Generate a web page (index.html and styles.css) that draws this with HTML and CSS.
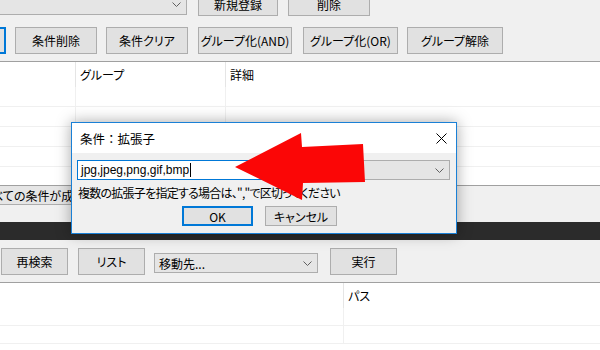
FILE: index.html
```html
<!DOCTYPE html>
<html lang="ja">
  <head>
    <meta charset="UTF-8">
    <title>条件：拡張子</title>
    <link rel="stylesheet" href="styles.css">
  </head>
  <body>
    <div class="pane">
      <div class="toolbar top-row">
        <div class="combo combo-top">
          <svg class="chev" width="9" height="5" viewBox="0 0 9 5"><polyline points="0.5,0.5 4.5,4.5 8.5,0.5"/></svg>
        </div>
        <button class="btn w-reg">新規登録</button>
        <button class="btn w-del">削除</button>
      </div>
      <div class="toolbar cond-row">
        <button class="btn btn-focus btn-cut"></button>
        <button class="btn w-cdel">条件削除</button>
        <button class="btn w-cclr">条件クリア</button>
        <button class="btn w-and">グループ化(AND)</button>
        <button class="btn w-or">グループ化(OR)</button>
        <button class="btn w-ungrp">グループ解除</button>
      </div>
      <div class="list list-top">
        <div class="lrow lhead">
          <div class="cell c-a"></div>
          <div class="cell c-b">グループ</div>
          <div class="cell c-c">詳細</div>
        </div>
        <div class="lrow"><div class="cell c-a"></div><div class="cell c-b"></div><div class="cell c-c"></div></div>
        <div class="lrow"><div class="cell c-a"></div><div class="cell c-b"></div><div class="cell c-c"></div></div>
        <div class="lrow"><div class="cell c-a"></div><div class="cell c-b"></div><div class="cell c-c"></div></div>
        <div class="lrow"><div class="cell c-a"></div><div class="cell c-b"></div><div class="cell c-c"></div></div>
        <div class="lrow"><div class="cell c-a"></div><div class="cell c-b"></div><div class="cell c-c"></div></div>
      </div>
      <div class="status-row">
        <span class="status-box">すべての条件が成立</span>
      </div>
    </div>

    <div class="band"></div>

    <div class="pane">
      <div class="toolbar lower-row">
        <button class="btn w-re">再検索</button>
        <button class="btn w-list">リスト</button>
        <div class="combo combo-move">
          <span>移動先...</span>
          <svg class="chev" width="9" height="5" viewBox="0 0 9 5"><polyline points="0.5,0.5 4.5,4.5 8.5,0.5"/></svg>
        </div>
        <button class="btn w-run">実行</button>
      </div>
      <div class="list list-bottom">
        <div class="lrow lhead">
          <div class="cell c-path0"></div>
          <div class="cell c-path">パス</div>
        </div>
        <div class="lrow"><div class="cell c-path0"></div><div class="cell c-path"></div></div>
        <div class="lrow"><div class="cell c-path0"></div><div class="cell c-path"></div></div>
      </div>
    </div>

    <div class="dialog">
      <div class="dlg-title">
        <span class="dlg-caption">条件：拡張子</span>
        <svg class="close" width="11" height="11" viewBox="0 0 11 11"><path d="M0.5 0.5 L10.5 10.5 M10.5 0.5 L0.5 10.5"/></svg>
      </div>
      <div class="dlg-body">
        <div class="combo combo-ext">
          <div class="edit">jpg,jpeg,png,gif,bmp<span class="caret"></span></div>
          <svg class="chev" width="9" height="5" viewBox="0 0 9 5"><polyline points="0.5,0.5 4.5,4.5 8.5,0.5"/></svg>
        </div>
        <p class="hint">複数の拡張子を指定する場合は、","で区切ってください</p>
        <div class="dlg-buttons">
          <button class="btn btn-focus w-ok">OK</button>
          <button class="btn w-cancel">キャンセル</button>
        </div>
      </div>
    </div>

    <svg class="arrow" width="600" height="350" viewBox="0 0 600 350">
      <polygon points="235,167 301,133 302,147 363,144 365,182 303,183 302,200"/>
    </svg>
  </body>
</html>
```

FILE: styles.css
```css
* {box-sizing: border-box;}
body {
	margin: 0;
	width: 600px;
	height: 350px;
	overflow: hidden;
	position: relative;
	background: #f0f0f0;
	color: #000;
	font-family: "Noto Sans CJK JP", "Noto Sans", sans-serif;
	font-size: 12px;
	font-feature-settings: "palt";
}
.pane {background: #f0f0f0;}
.toolbar {
	display: flex;
	align-items: flex-start;
}
.btn {
	height: 27px;
	padding: 0;
	border: 1px solid #adadad;
	background: #e1e1e1;
	color: #000;
	font: inherit;
	display: flex;
	align-items: center;
	justify-content: center;
	flex: none;
}
.btn-focus {border: 2px solid #0078d7;}
.combo {
	height: 22px;
	border: 1px solid #adadad;
	background: #e5e5e5;
	display: flex;
	align-items: center;
	flex: none;
}
.chev {
	margin-left: auto;
	margin-right: 5px;
	fill: none;
	stroke: #606060;
	stroke-width: 1;
}

/* top window */
.top-row {margin-top: -7px; height: 23px;}
.top-row .btn {height: 23px;}
.combo-top {width: 188px; margin-left: -1px; height: 22px;}
.w-reg {width: 80px; margin-left: 11px;}
.w-del {width: 82px; margin-left: 10px;}
.cond-row {margin-top: 11px;}
.btn-cut {width: 40px; margin-left: -34px;}
.w-cdel {width: 82px; margin-left: 9px;}
.w-cclr {width: 82px; margin-left: 9px;}
.w-and {width: 94px; margin-left: 10px;}
.w-or {width: 95px; margin-left: 11px;}
.w-ungrp {width: 96px; margin-left: 9px;}

.list {
	background: #fff;
	border-top: 1px solid #a0a0a0;
	overflow: hidden;
}
.list-top {
	margin-top: 7px;
	height: 125px;
	border-bottom: 1px solid #a0a0a0;
}
.lrow {
	display: flex;
	height: 20px;
	border-bottom: 1px solid #f0f0f0;
}
.list-top .lhead {height: 25px; border-bottom: none;}
.cell {
	height: 100%;
	border-right: 1px solid #f0f0f0;
	padding-left: 4px;
	display: flex;
	align-items: center;
}
.lhead .cell {border-right-color: #e5e5e5;}
.c-a {width: 76px;}
.c-b {width: 150px;}
.c-c {flex: 1; border-right: none;}

.status-row {height: 36px;}
.status-box {
	display: inline-flex;
	align-items: center;
	height: 19px;
	margin-left: -26px;
	padding-left: 6px;
	padding-right: 20px;
	background: #e5e5e5;
	border: 1px solid #adadad;
	border-top: none;
}

.band {
	height: 18px;
	background: #2b2b2b;
}

/* lower window */
.lower-row {height: 42px; padding-top: 8px;}
.w-re {width: 67px; margin-left: 1px;}
.w-list {width: 67px; margin-left: 10px;}
.combo-move {
	width: 164px;
	height: 20px;
	margin: 5px 0 0 9px;
	padding-left: 4px;
}
.w-run {width: 67px; margin-left: 12px;}
.list-bottom {height: 68px;}
.list-bottom .lrow {height: 18px;}
.list-bottom .lrow.lhead {height: 25px; border-bottom: none;}
.c-path0 {width: 344px;}
.c-path {flex: 1; border-right: none;}

/* dialog */
.dialog {
	position: absolute;
	left: 71px;
	top: 122px;
	width: 386px;
	height: 112px;
	border: 1px solid #1a80d6;
	background: #f0f0f0;
	box-shadow: 0 0 14px rgba(0, 0, 0, 0.35);
}
.dlg-title {
	height: 30px;
	background: #fff;
	display: flex;
	align-items: center;
	padding: 0 9px 0 8px;
	font-size: 12.5px;
}
.dlg-caption {font-feature-settings: normal;}
.close {
	margin-left: auto;
	fill: none;
	stroke: #000;
	stroke-width: 1;
}
.dlg-body {padding: 7px 5px 0 5px;}
.combo-ext {width: 373px; height: 20px;}
.edit {
	width: 232px;
	height: 20px;
	margin: -1px 0 0 -1px;
	background: #fff;
	border: 1px solid #0078d7;
	padding-left: 3px;
	display: flex;
	align-items: center;
	font-family: "Liberation Sans", sans-serif;
}
.caret {
	display: inline-block;
	width: 1px;
	height: 14px;
	background: #000;
	margin-left: 1px;
}
.hint {
	margin: 6px 0 0 1px;
	line-height: 14px;
	white-space: nowrap;
	letter-spacing: -0.75px;
}
.dlg-buttons {
	display: flex;
	margin-top: 6px;
	padding-left: 105px;
}
.w-ok {width: 71px; height: 20px;}
.w-cancel {width: 72px; height: 20px; margin-left: 12px;}

.arrow {
	position: absolute;
	left: 0;
	top: 0;
	fill: #fb0606;
}
```
